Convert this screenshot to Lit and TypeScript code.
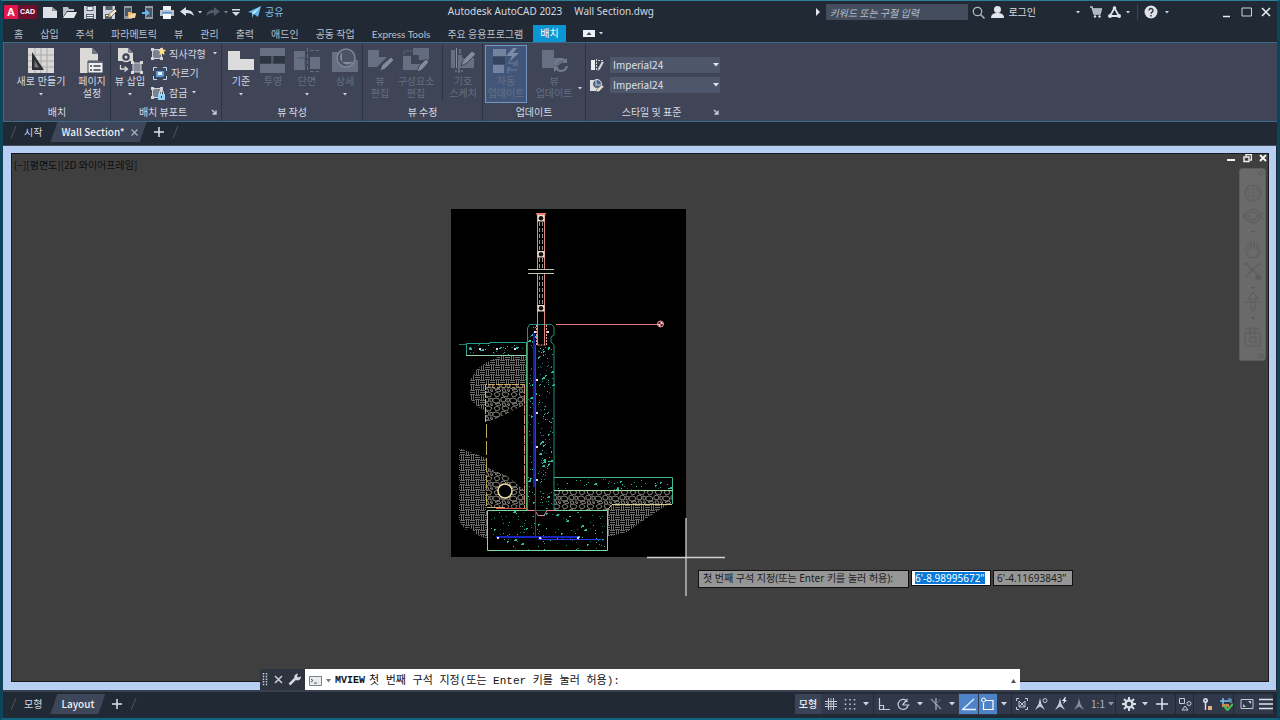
import { LitElement, html, svg, css, type TemplateResult } from "lit";
import { customElement, property } from "lit/decorators.js";

type Shape = unknown;

const icon = (w: number, h: number, body: Shape, cls = "") =>
  html`<svg class=${cls} width=${w} height=${h} viewBox="0 0 ${w} ${h}" fill="none" aria-hidden="true">${body}</svg>`;

const caret = (color = "#cfd6e2") => icon(6, 4, svg`<path d="M0 0h6L3 3.5z" fill=${color} />`);

/* ---------- quick access glyphs ---------- */
const qaNew = icon(14, 12, svg`<path d="M0 1h9l5 4v7H0z" fill="#dde1e7"/><path d="M9 1v4h5" fill="#8c94a1"/>`);
const qaOpen = icon(14, 12, svg`<path d="M0 11V1h5l1 2h5v2H4z" fill="#b9c0ca"/><path d="M4 6h10l-3 6H0z" fill="#e3e6ea"/>`);
const qaSave = icon(14, 13, svg`<path d="M1 0h12v13H1z" fill="#cfd4dc"/><path d="M3.500 0h7v5h-7zM3 8h8v5H3z" fill="#55606f"/><path d="M4.500 1h5v3h-5zM4 9h6v1H4zM4 11h6v1H4z" fill="#eceff3"/>`);
const qaSaveAs = icon(14, 13, svg`<path d="M0 0h12v13H0z" fill="#cfd4dc"/><path d="M2.500 0h7v4h-7zM2 8h7v5H2z" fill="#55606f"/><path d="M3 9h4v1H3z" fill="#eee"/><path d="M5 11l1-3 6-5 2 2-6 6z" fill="#f3e6c8" stroke="#27303d" stroke-width=".6"/><path d="M5 11l1-3 2 2z" fill="#dd9b49"/>`);
const qaMobOpen = icon(13, 13, svg`<path d="M1 0h8v13H1z" fill="#9099a6"/><path d="M2 2h6v8H2z" fill="#4c5664"/><path d="M5 12V6h3l1 1h4l-1 5z" fill="#e6b565"/><path d="M7 8h6l-1.500 4H5.500z" fill="#f4d59b"/>`);
const qaMobSave = icon(12, 13, svg`<path d="M3 0h8v13H3z" fill="#9099a6"/><path d="M4 2h6v9H4z" fill="#4c5664"/><path d="M0 6h4V3.500L8 7 4 10V8H0z" fill="#68b6f0"/>`);
const qaPrint = icon(14, 13, svg`<path d="M3 0h8v4H3z" fill="#eef0f3"/><path d="M0 4h14v6H0z" fill="#b9c2ce"/><path d="M2 6h10v1.500H2z" fill="#4b90cf"/><path d="M3 8h8v5H3z" fill="#f5f6f8"/>`);
const undo = (c: string) => icon(14, 10, svg`<path d="M6 0v3c5 0 7 2 8 6-2-2-4-3-8-3v3L0 4.500z" fill=${c}/>`);
const redo = icon(14, 10, svg`<path d="M8 0v3C3 3 1 5 0 9c2-2 4-3 8-3v3l6-4.500z" fill="#515a68"/>`);
const customize = icon(8, 7, svg`<path d="M0 0h8v1.500H0zM0 3h8L4 7z" fill="#d6dbe3"/>`);
const share = icon(13, 12, svg`<path d="M0 6L13 0 10 11 6 8 4 12 4 7z" fill="#62b7ee"/><path d="M4 7L13 0 6 8z" fill="#d4ecfb"/>`);

/* ---------- ribbon glyphs ---------- */
const dim = "#667082";
const bigNew = icon(28, 26, svg`<path d="M1 0h26v25H1z" fill="#d9d8d6"/><path d="M8 0v25M14 0v25M20 0v25M1 7h26M1 13h26M1 19h26" stroke="#aaa9a8"/><path d="M5 4v18h12z" fill="#2a2d33"/><path d="M7.500 12v7.500H12z" fill="#77797d"/>`);
const bigPage = icon(28, 26, svg`<path d="M2 0h12l6 6v19H2z" fill="#dcdad7"/><path d="M14 0v6h6" fill="#6f747d"/><path d="M10 13h15v12H10z" fill="#f1efec" stroke="#3f4556"/><path d="M10 13h15v2H10z" fill="#5f6673"/><path d="M12 18h2M12 22h2M15.500 18h7M15.500 22h7" stroke="#35425a" stroke-width="1.500"/>`);
const bigInsert = icon(28, 26, svg`<path d="M2 0h10l5 5v8H2z" fill="#dcdad7"/><path d="M12 0v5h5" fill="#7a7f88"/><circle cx="10" cy="9" r="4.500" fill="#3f4556" stroke="#dcdad7" stroke-width="1.500"/><circle cx="10" cy="9" r="1.500" fill="#dcdad7"/><path d="M4.500 17v4H11M8.500 18.500l3 2.500-3 2.500" stroke="#dcdad7" stroke-width="1.300"/><path d="M17 15h8v9h-8z" fill="#858b96" stroke="#cfd2d8"/><path d="M15 13h3v3h-3zM24 13h3v3h-3zM15 23h3v3h-3zM24 23h3v3h-3z" fill="#dcdad7"/>`);
const bigBase = icon(28, 26, svg`<path d="M1 3h12v8h14v11H1z" fill="#dcdcdd"/>`);
const bigProj = icon(28, 26, svg`<path d="M1 0h25v8H1zM1 16h25v9H1z" fill=${dim}/><path d="M1 8h12v7H1zM15 8h11v7H15z" fill="#2d3442"/><path d="M13 8v8" stroke=${dim}/>`);
const bigSection = icon(28, 26, svg`<path d="M1 3h11v19H1zM17 9h10v12H17z" fill=${dim}/><path d="M14.500 0v24M17 2.500h9M17 23.500h9" stroke=${dim} stroke-dasharray="4 2"/><path d="M4 10h8v8" stroke="#4d5566"/>`);
const bigDetail = icon(28, 26, svg`<path d="M1 4h8v8h18v12H1z" fill=${dim}/><circle cx="15" cy="10" r="9" stroke="#7c8596" stroke-width="1.500" fill="#4b5364"/><path d="M11 4v10h11a7 7 0 1 1-11-10z" fill="#838c9c"/>`);
const bigEdit = icon(28, 26, svg`<path d="M2 2h11v7h8L11 19H2z" fill=${dim}/><path d="M14 23l2-6 9-8 3 3-9 9z" fill="#828b9b" stroke="#3f4556"/>`);
const bigComp = icon(28, 26, svg`<path d="M1 8h8v8h9v6H1z" fill=${dim}/><path d="M11 0h16v12H17V7h-6z" fill="#626c7e"/><path d="M10 3H2v4" stroke=${dim} stroke-dasharray="2 1"/><path d="M15 24l2-6 7-7 3 3-7 8z" fill="#828b9b" stroke="#3f4556"/>`);
const bigSketch = icon(28, 26, svg`<path d="M2 2h4v18H2zM9 7h4v13H9zM13 10h12v10H13z" fill=${dim}/><path d="M7.500 0v20M11 1v5" stroke="#828b9b"/><path d="M12 18l2-6 9-9 4 3-9 9z" fill="#828b9b" stroke="#3f4556"/><path d="M6 23h9M10 20v5" stroke="#828b9b" stroke-dasharray="2 1"/>`);
const bigAuto = icon(28, 26, svg`<path d="M1 1h13v7H1zM1 17h11v8H1z" fill="#7484a0"/><path d="M1 9h12v7H1z" fill="#34445f"/><path d="M21 0l-7 8h6l-3 6 10-9h-6l4-5z" fill="#7c8ca8"/><path d="M16 15h9M25 12v5h-4M25 22h-9M16 25v-5h3" stroke="#61728f" stroke-width="1.500"/>`);
const bigUpdate = icon(28, 26, svg`<path d="M2 2h12v8h9v4L15 20H2z" fill=${dim}/><path d="M15 16a6 6 0 0 1 11-2M27 18a6 6 0 0 1-11 2" stroke="#747d8e" stroke-width="2"/><path d="M27 10v5h-5zM14 24v-5h5z" fill="#747d8e"/>`);
const vpHandles = svg`<path d="M2 1h3v3H2zM11 1h3v3h-3zM2 10h3v3H2zM11 10h3v3h-3z" transform="translate(-2)" fill="#cfd2d8"/>`;
const smRect = icon(15, 13, svg`<path d="M1.500 2.500h9v9h-9z" fill="#7b828e" stroke="#cfd2d8"/>${vpHandles}<path d="M11 0l1 2.500 3 .5-2 2 .5 3L11 6.500 8.500 8 9 5 7 3l3-.5z" fill="#ffdf8a"/>`);
const smClip = icon(15, 13, svg`<path d="M3 4h8v5l-2 1H3z" fill="#5d9ce0"/><path d="M5 5h4v3H5z" fill="#e8f2ff"/><path d="M.500 4V.500H4M10 .500h3.500V4M.500 9v3.500H4M10 12.500h3.500V9" stroke="#b5dcff"/>`);
const smLock = icon(15, 14, svg`<path d="M1.500 2.500h9v9h-9z" fill="#7b828e" stroke="#cfd2d8"/>${vpHandles}<path d="M7 8h7v6H7z" fill="#8fd2f5"/><path d="M8.500 8V6.500a2 2 0 0 1 4 0V8" stroke="#e4f4fd"/><path d="M10 10h1v2h-1z" fill="#335"/>`);
const smSection = icon(14, 14, svg`<path d="M1 2h4v10H1z" fill="#eceef1"/><path d="M6.500 1v12M8 2.500h5M8 11.500h3" stroke="#cfd3da" stroke-dasharray="2 1"/><path d="M7 13l1-3 4-7 2 1.500-4 7z" fill="#d9dce2" stroke="#3f4556" stroke-width=".500"/>`);
const smDetail = icon(14, 14, svg`<path d="M0 2h4v7h6v4H0z" fill="#dcdfe4"/><circle cx="7" cy="6" r="4.500" stroke="#dfe3e9" fill="#56617a"/><path d="M6 2v5h5" stroke="#9fb6d8" stroke-width="1.500"/><path d="M6 14l1-3 5-4 2 1.500-5 5z" fill="#f0e4c8" stroke="#3f4556" stroke-width=".500"/>`);
const launcher = icon(6, 6, svg`<path d="M1 1l3 3M5 1.500V5H1.500" stroke="#cdd3dd" stroke-width="1.300"/>`);

/* ---------- status bar glyphs ---------- */
const s = "#c6ccd7";
const stGrid = icon(14, 14, svg`<path d="M4.500 1v12M9.500 1v12M1 4.500h12M1 9.500h12" stroke=${s}/><path d="M7 1v12M1 7h12" stroke=${s} stroke-width=".800"/>`);
const stSnap = icon(14, 14, svg`<path d="M2.500 2v11M7 2v11M11.500 2v11" stroke=${s} stroke-width="1.500" stroke-dasharray="1.500 3"/>`);
const stOrtho = icon(14, 14, svg`<path d="M2.500 1v11.500H13M2.500 8.500h4v4" stroke=${s} stroke-width="1.200"/>`);
const stPolar = icon(14, 14, svg`<path d="M11.500 5A5 5 0 1 0 12 8.500M6.500 8h7M6.500 8l5-6" stroke=${s} stroke-width="1.200"/>`);
const stIso = icon(14, 14, svg`<path d="M2 2l10 10" stroke="#8f98a8" stroke-width="1.200"/><path d="M7 1v12" stroke=${s}/><path d="M7 7L12 2" stroke="#606b7d"/>`);
const stTrack = icon(16, 14, svg`<path d="M1 12.500h14M2 12L13 2" stroke="#e8f1ff" stroke-width="1.300"/>`);
const stOsnap = icon(16, 14, svg`<path d="M5.500 3.500H13v9H3.500V6" stroke="#fff" stroke-width="1.200"/><circle cx="3.500" cy="3" r="2" stroke="#fff"/>`);
const stSel = icon(14, 14, svg`<path d="M1.500 4V1.500H4M10 1.500h2.500V4M1.500 10v2.500H4M10 12.500h2.500V10" stroke=${s}/><path d="M4 4l6 6M10 4l-6 6M4 4v6h6V4" stroke=${s}/>`);
const person = (extra: Shape, c = s) => icon(14, 14, svg`<path d="M6 1l1.500 6L11 13 6 9.500 1 13 4.500 7z" fill=${c}/>${extra}`);
const stAnn1 = person(svg`<circle cx="11" cy="3.500" r="2" stroke=${s}/>`);
const stAnn2 = person(svg`<path d="M11 0L8 4h2L9 7l4-4h-2l1-3z" fill="#e7ebf1"/>`);
const stAnn3 = person("", "#858e9e");
const stGear = icon(14, 14, svg`<circle cx="7" cy="7" r="3.500" stroke="#d6dbe4" stroke-width="2.500"/><path d="M7 0v3M7 11v3M0 7h3M11 7h3M2 2l2.200 2.200M9.800 9.800L12 12M12 2L9.800 4.200M4.200 9.800L2 12" stroke="#d6dbe4" stroke-width="2"/>`);
const plus = (n: number) => icon(n, n, svg`<path d=${`M${n / 2} 1v${n - 2}M1 ${n / 2}h${n - 2}`} stroke="#dfe3ea" stroke-width="1.500"/>`);
const stIsolate = icon(14, 14, svg`<path d="M1.500 1.500h5v5h-5zM7 9l3 4H4z" stroke=${s}/><circle cx="11" cy="6.500" r="2" stroke=${s}/>`);
const stHw = icon(14, 14, svg`<circle cx="5.500" cy="3.500" r="2.500" fill="#d6dbe4"/><circle cx="5.500" cy="3.500" r=".8" fill="#303849"/><path d="M5.500 5v8" stroke="#d6dbe4" stroke-width="1.500"/><path d="M8 9h4v4H8z" fill="#e6b27c"/>`);
const stHwOk = icon(14, 14, svg`<path d="M1 4h10M4 1v8" stroke="#7fc0ef" stroke-width="1.500"/><path d="M3 7h7v3H3z" fill="#c98a4b"/><path d="M5 9l3.500 4L14 7" stroke="#4fbd55" stroke-width="2"/><path d="M9 2h3v4" stroke="#7fc0ef"/>`);
const stFull = icon(14, 12, svg`<path d="M1 1.500h12v9H1z" stroke=${s}/><path d="M8 3h3v3zM3 6v3h3z" fill=${s}/>`);
const stMenu = icon(14, 12, svg`<path d="M0 1.500h14M0 6h14M0 10.500h14" stroke="#dfe3ea" stroke-width="1.300"/>`);

/* ---------- wall section drawing ---------- */
const specks = (seed: number, x: number, y: number, w: number, h: number, n: number) => {
  let v = seed;
  const next = () => (v = (v * 16807) % 2147483647) / 2147483647;
  next();
  const tones = ["#1d8f78", "#2bb396", "#0f5f50", "#39c9b0", "#0d5347", "#1a7f6b"];
  return Array.from({ length: n }, (_, i) => {
    const px = Math.round(x + next() * w);
    const py = Math.round(y + next() * h);
    return i % 8 === 0
      ? svg`<path d=${i % 16 ? `M${px} ${py}h2v1h-1v1h-1z` : `M${px} ${py}h1v-1h2v2h-3z`} fill="#2fbfa6" />`
      : svg`<rect x=${px} y=${py} width="1" height="1" fill=${tones[i % tones.length]} />`;
  });
};

const rebar = (pts: number[][]) => pts.map(([x, y]) => svg`<rect x=${x - 1} y=${y - 1} width="2" height="2" fill="#e9ddff" />`);

@customElement("wall-section")
export class WallSection extends LitElement {
  static styles = css`
    :host { display: block; }
    svg { display: block; background: #000; }
  `;
  render() {
    return html`<svg width="235" height="348" viewBox="451 209 235 348" fill="none" role="img" aria-label="Wall Section">
      <defs>
        <pattern id="earth" width="10" height="10" patternUnits="userSpaceOnUse">
          <path d="M0 .5h5M0 2.500h5M0 4.500h5M6.500 0v5M8.500 0v5M1.500 5v5M3.500 5v5M5 5.500h5M5 7.500h5M5 9.500h5" stroke="#6c6c6c" />
        </pattern>
        <pattern id="gravel" width="17" height="14" patternUnits="userSpaceOnUse">
          <path d="M1 2l3-2 3 2-1 2-3 1zM9 1l4-1 3 2-2 3-4-1zM0 7l3-1 3 1 1 3-4 1-3-1zM8 6l3-1 2 2-1 3-4-1zM14 6l3 1-1 3-2 0zM2 12l4-1 2 2-3 1zM9 11l3 0 1 3-3 0zM14 12l3 0-1 2z" stroke="#8f8b84" stroke-width=".9" />
        </pattern>
      </defs>

      <path d="M500 356h26v29h-40v26l-8-4-8-8v-18l6-11 11-8z" fill="url(#earth)" />
      <path d="M486 385h38v20l-20 10-18 8z" fill="url(#gravel)" />
      <path d="M459 448l27 10v53h2v29l-12-6-6-7-4 3-7-8z" fill="url(#earth)" />
      <path d="M486 467l21 9 17 14v18h-38z" fill="url(#gravel)" />
      <path d="M554 491h119v13h-60l-6 6h-53z" fill="url(#gravel)" />
      <path d="M607 510l6-5h54l-26 17-14 10-20 5z" fill="url(#earth)" />

      ${specks(911, 468, 344, 56, 10, 34)}
      ${specks(2303, 538, 346, 14, 162, 150)}
      ${specks(7717, 528, 340, 6, 168, 60)}
      ${specks(505, 528, 326, 8, 16, 10)}
      ${specks(3701, 489, 512, 116, 37, 130)}
      ${specks(5309, 556, 479, 114, 10, 46)}

      <path d="M459 344.500h7" stroke="#1d7a70" />
      <path d="M466.500 355V343.500H490V342.500H527" stroke="#27a08f" />
      <path d="M466 355.500h61" stroke="#8fd6b0" />
      <path d="M527.500 511V328l2-3.500h22l2.500 2.500v8l-3 2v5l3 3v166" stroke="#1d9080" />
      <path d="M526.500 343v167" stroke="#4fae74" />
      <path d="M554 477.500h118.500V504" stroke="#3fb497" />
      <path d="M554 490.500h119" stroke="#a5e1a5" />
      <path d="M554 510.500h53l5-6h60" stroke="#d8cf90" />

      <path d="M485.500 422v-37.500h39" stroke="#d8b06a" stroke-dasharray="7 1" />
      <path d="M487 387.500h36" stroke="#a98a58" stroke-dasharray="3 2" />
      <path d="M486.500 424v84" stroke="#b3a860" stroke-dasharray="14 3" />
      <path d="M524.500 385v124" stroke="#e08a76" stroke-dasharray="9 1" />
      <path d="M487 507.500h18" stroke="#d8b06a" />
      <path d="M496 508.500h31" stroke="#d9564d" />
      <circle cx="505" cy="491" r="7" fill="#000" stroke="#f2dfa0" stroke-width="1.500" />

      <path d="M487.500 510.500v40h120v-40z" stroke="#79dba0" />
      <path d="M527 510.500h8l3 5h6l3-5h8" stroke="#e5889a" fill="#000" />
      <path d="M533 332h2v155h-2z" fill="#141fa8" />
      <path d="M535 345h1v193h-1z" fill="#2a38ee" />
      <path d="M496 536h82v2h-82z" fill="#1825c0" />
      <path d="M538 539h63v1h-63z" fill="#2a38ee" />
      ${rebar([[498, 538], [540, 538], [578, 538], [537, 413], [537, 447], [537, 480], [537, 380], [480, 349], [497, 349], [515, 349], [535, 332], [548, 332]])}

      <path d="M537 216h1v129h-1zM544 216h1v129h-1z" fill="#e0877d" />
      <path d="M536.500 325v20h10v-20" stroke="#e7a19a" stroke-dasharray="2 1" />
      <path d="M539.500 222v86M542.500 222v86" stroke="#a09490" stroke-dasharray="4 2" />
      <path d="M537 216h8l1-3h-10z" fill="#f08074" />
      <path d="M533 270h16v3h-16z" fill="#000" />
      <path d="M528 269.500h26M528 273.500h26" stroke="#bfc8b4" />
      ${[218, 254, 308].map((y) => svg`<rect x="537.500" y=${y - 3} width="7" height="6.500" fill="#f0dcd0" /><circle cx="541" cy=${y + 0.3} r="2.300" fill="#111" />`)}
      <path d="M556 324h101v1h-101z" fill="#e07f7a" />
      <circle cx="660.500" cy="324" r="3" fill="#5a1c20" stroke="#f09aa0" />
      <path d="M660.500 321v3h3zM660.500 324v3l-3-3z" fill="#ffd0d2" />
    </svg>`;
  }
}

@customElement("ribbon-button")
export class RibbonButton extends LitElement {
  @property() label = "";
  @property() second = "";
  @property({ type: Boolean }) menu = false;
  @property({ type: Boolean }) off = false;
  @property({ attribute: false }) glyph: TemplateResult | null = null;
  static styles = css`
    :host { display: block; flex: none; }
    button {
      width: 100%; height: 58px; padding: 3px 0 0; margin: 0; border: 0; background: none;
      display: flex; flex-direction: column; align-items: center;
      color: #d5dae3; font: 10px/12px "Liberation Sans", "Noto Sans CJK KR", sans-serif; white-space: nowrap;
    }
    button:disabled { color: #656e80; }
    svg { display: block; flex: none; }
    .text { margin-top: 2px; }
    .menu { height: 12px; display: flex; align-items: center; }
  `;
  render() {
    return html`<button ?disabled=${this.off}>
      ${this.glyph}
      <span class="text">${this.label}</span>
      ${this.second ? html`<span>${this.second}</span>` : ""}
      ${this.menu ? html`<span class="menu">${icon(4, 3, svg`<path d="M0 0h4L2 2.500z" fill="#cfd6e2"/>`)}</span>` : ""}
    </button>`;
  }
}

@customElement("app-root")
export class AppRoot extends LitElement {
  static styles = css`
    :host {
      display: flex; flex-direction: column; height: 100vh; box-sizing: border-box; overflow: hidden;
      border: 3px solid #0d4459; border-top: 1px solid #2b8296; border-bottom: 2px solid #0f6480;
      background: #212934; color: #c9cfd9;
      font: 10px/12px "Noto Sans CJK KR", "Noto Sans", sans-serif;
    }
    * { box-sizing: border-box; }
    button, input, select { font: inherit; color: inherit; margin: 0; padding: 0; border: 0; background: none; border-radius: 0; }
    button { display: inline-flex; align-items: center; justify-content: center; }
    a { color: inherit; text-decoration: none; }
    svg { display: block; flex: none; }
    .wide { font-family: "Noto Sans", "Noto Sans CJK KR", sans-serif; }

    .title { display: flex; align-items: center; height: 24px; flex: none; padding: 0 6px 2px 1px; }
    .quick { display: flex; align-items: center; gap: 6px; }
    .quick .drop { margin: 0 -2px; }
    .logo { display: flex; height: 14px; width: 33px; background: #6d0f2d; color: #fff; font: bold 7px/14px "Liberation Sans", sans-serif; border-radius: 1px; overflow: hidden; }
    .logo b { width: 14px; background: #e3174f; font-size: 11px; text-align: center; }
    .logo span { flex: 1; text-align: center; }
    .share { gap: 4px; color: #7fc0ee; margin-left: 2px; }
    .name { flex: 1; display: flex; justify-content: center; gap: 12px; color: #d3d8e0; white-space: nowrap; padding: 0 0 2px 2px; }
    .account { display: flex; align-items: center; }
    .search { width: 142px; height: 16px; background: #434d5d; color: #c3cad6; padding: 0 3px; margin: 0 4px 0 6px; font-style: italic; }
    .search::placeholder { color: #b6bfcd; opacity: 1; }
    .login { gap: 4px; margin: 0 40px 0 6px; color: #d9dee6; }
    .cart { margin-left: 10px; }
    .apps { gap: 5px; margin-left: 6px; }
    .rule { width: 1px; height: 16px; background: #3c4553; margin: 0 6px 0 7px; }
    .help { gap: 7px; }
    .window { display: flex; gap: 9px; margin-left: 52px; }

    .menu { display: flex; align-items: center; height: 17px; flex: none; padding-left: 11px; gap: 17px; color: #b9c0cc; white-space: nowrap; }
    .menu .on { background: #0b95d2; color: #fff; height: 17px; padding: 2px 7px; margin: 0 0 0 -7px; }
    .menu .fold { gap: 4px; }
    .latin { font-family: "Lato", sans-serif; }

    .ribbon { display: flex; height: 80px; flex: none; background: #3f4557; border: 1px solid #3a6c8a; border-width: 1px 0 1px 1px; }
    .panel { display: grid; grid-template-rows: 60px 1fr; border-right: 1px solid #2c3342; color: #d5dae3; }
    .tools { display: flex; padding-top: 2px; }
    .panel h2 { margin: 0; font: inherit; display: flex; align-items: center; padding: 0 4px; }
    .panel h2 span { flex: 1; text-align: center; }
    .panel.last { border: 0; }
    .pad { padding-right: 4px; }
    .w26 { width: 26px; } .w28 { width: 28px; } .w34 { width: 34px; } .w38 { width: 38px; } .w42 { width: 42px; } .w54 { width: 54px; } .w74 { width: 74px; }
    .rows { display: flex; flex-direction: column; justify-content: space-between; align-items: flex-start; height: 52px; padding: 0 4px 0 2px; margin-top: 2px; }
    .rows button { gap: 3px; white-space: nowrap; height: 13px; }
    .rows button svg:last-child { margin-left: 2px; }
    .sep { width: 1px; height: 56px; background: #2c3342; margin: 0 1px 0 7px; }
    .lit { background: #42567a; outline: 1px solid #7294c2; outline-offset: -1px; }
    .more { align-self: center; margin: 28px 3px 0 -3px; }
    .auto { padding-left: 2px; }
    .styles { display: flex; flex-direction: column; gap: 4px; padding: 14px 3px 0 4px; }
    .styles label { display: flex; align-items: center; gap: 6px; }
    .combo { position: relative; width: 110px; height: 16px; display: flex; }
    .combo select { appearance: none; width: 100%; background: #4d566b; padding: 0 3px; color: #dde2ea; }
    .combo svg { position: absolute; right: 1px; top: 6px; }

    .tabs { display: flex; align-items: center; height: 24px; flex: none; padding: 0 0 3px 6px; border-bottom: 1px solid #444c5a; color: #d5dae3; }
    .tabs.foot { height: auto; padding: 0 0 0 6px; border: 0; }
    .tabs > a { padding: 4px 8px 4px 7px; }
    .tabs > button { width: 24px; height: 20px; }
    .tab { display: flex; align-items: center; gap: 5px; height: 20px; padding: 0 8px 0 11px; background: #3e4659; color: #eceff4; font-weight: 500; clip-path: polygon(7px 0, 100% 0, calc(100% - 7px) 100%, 0 100%); }
    .tabs.foot .tab { padding: 0 11px; }

    .work { position: relative; flex: 1; min-height: 0; padding: 7px 7px 8px 8px; background: #b7cff2; display: flex; margin-right: 1px; }
    .canvas { position: relative; flex: 1; background: #3f3f3f; border: 1px solid #17191d; overflow: hidden; }
    .view { color: #0d0d0d; padding: 5px 2px; }
    .sheet { position: absolute; left: 439px; top: 55px; }
    .cross { position: absolute; left: 635px; top: 364px; }
    .prompt { position: absolute; left: 686px; top: 416px; display: flex; align-items: flex-start; gap: 2px; color: #1c1c1c; }
    .prompt label { background: #969696; border: 1px solid #101010; height: 18px; padding: 1px 4px; width: 211px; white-space: nowrap; }
    .value { display: flex; align-items: center; border: 1px solid #101010; height: 16px; width: 80px; padding: 0 3px; background: #969696; }
    .value input { width: 70px; height: 12px; }
    .value.active { background: #fff; }
    .value.active input { background: #0a78d7; color: #fff; }
    .doc { position: absolute; right: 0; top: 0; display: flex; gap: 7px; }
    .nav { position: absolute; right: 2px; top: 14px; width: 27px; height: 193px; background: #6a6a6a; border: 1px solid #5c5c5c; border-radius: 3px; }

    .command { position: absolute; left: 257px; right: 256px; bottom: 0; height: 21px; display: flex; background: #2d333f; color: #111; }
    .command .grip { width: 45px; display: flex; align-items: center; justify-content: space-between; padding: 0 4px 0 2px; }
    .command .line { flex: 1; display: flex; align-items: center; gap: 4px; background: #fff; padding: 2px 4px 0; font-family: "Liberation Mono", "Noto Sans CJK KR", monospace; font-size: 11px; white-space: nowrap; }
    .command .line > b { font-size: 10px; }
    .command input { flex: 1; min-width: 0; height: 15px; }

    .status { display: flex; justify-content: space-between; align-items: center; height: 28px; flex: none; padding: 0 4px 2px 0; border-top: 2px solid #39404e; }
    .toggles { display: flex; background: #303849; height: 20px; color: #aeb6c4; }
    .toggles button { height: 20px; }
    .t8 { width: 8px; } .t14 { width: 14px; } .t18 { width: 18px; } .t20 { width: 20px; } .t26 { width: 26px; }
    .model { color: #eef0f4; font-weight: 500; background: #3b4356; }
    .hot { background: #4f83c8; outline: 1px solid #303849; }
    .edge { border-left: 1px solid #212934; }
  `;

  private combo(id: string, name: string, glyph: TemplateResult) {
    return html`<label for=${id} aria-label=${name}>${glyph}
      <span class="combo"><select id=${id} aria-label=${name}><option>Imperial24</option></select>${caret("#dfe4ec")}</span></label>`;
  }

  private btn(label: string, glyph: TemplateResult, cls: string, o: { second?: string; menu?: boolean; off?: boolean } = {}) {
    return html`<ribbon-button class=${cls} .label=${label} .glyph=${glyph} .second=${o.second ?? ""} .menu=${!!o.menu} .off=${!!o.off}></ribbon-button>`;
  }

  private slash() {
    return icon(8, 14, svg`<path d="M2 13L7 1" stroke="#4b5462"/>`);
  }

  render() {
    const tiny = (c = "#cfd6e2") => icon(4, 3, svg`<path d="M0 0h4L2 2.500z" fill=${c}/>`);
    const toggles: [string, unknown, string][] = [
      ["t26 model", "모형", "모형"], ["t20", stGrid, "그리드"], ["t18", stSnap, "스냅"], ["t14", caret(), "스냅 옵션"],
      ["t20 edge", stOrtho, "직교"], ["t20", stPolar, "극좌표"], ["t14", caret(), "극좌표 옵션"], ["t18", stIso, "등각투영"],
      ["t14", caret(), "등각투영 옵션"], ["t20 hot", stTrack, "객체 스냅 추적"], ["t18 hot", stOsnap, "객체 스냅"], ["t14", caret(), "객체 스냅 옵션"],
      ["t20 edge", stSel, "주석 감시"], ["t20", stAnn1, "주석 객체"], ["t20", stAnn2, "자동 축척"], ["t18", stAnn3, "주석 축척"],
      ["t18", "1:1", "축척"], ["t8", caret("#8e97a6"), "축척 옵션"], ["t26 edge", stGear, "작업공간"], ["t8", caret(), "작업공간 옵션"],
      ["t26", plus(14), "주석 모니터"], ["t18 edge", stIsolate, "객체 분리"], ["t26 edge", stHw, "하드웨어"], ["t14", stHwOk, "그래픽 성능"],
      ["t26 edge", stFull, "화면 정리"], ["t14", stMenu, "사용자화"],
    ];
    const quick: [TemplateResult, string, string?][] = [
      [qaNew, "새로 만들기"], [qaOpen, "열기"], [qaSave, "저장"], [qaSaveAs, "다른 이름으로 저장"], [qaMobOpen, "웹에서 열기"],
      [qaMobSave, "웹에 저장"], [qaPrint, "플롯"], [undo("#dde1e8"), "명령 취소"], [tiny(), "취소 목록", "drop"], [redo, "명령 복구"], [tiny("#7d8694"), "복구 목록", "drop"], [customize, "사용자화"],
    ];
    return html`
      <header class="title">
        <div class="quick">
          <div class="logo"><b>A</b><span>CAD</span></div>
          ${quick.map(([g, n, c]) => html`<button class=${c ?? ""} aria-label=${n}>${g}</button>`)}
          <button class="share">${share}공유</button>
        </div>
        <div class="name wide"><span>Autodesk AutoCAD 2023</span><span>Wall Section.dwg</span></div>
        <div class="account">
          ${icon(4, 8, svg`<path d="M0 0l4 4-4 4z" fill="#e4e8ee"/>`)}
          <input class="search" type="search" aria-label="검색" placeholder="키워드 또는 구절 입력" />
          <button aria-label="검색">${icon(13, 13, svg`<circle cx="5.500" cy="5.500" r="4.200" stroke="#aeb6c2" stroke-width="1.300"/><path d="M8.500 8.500l4 4" stroke="#aeb6c2" stroke-width="1.500"/>`)}</button>
          <button class="login">${icon(13, 12, svg`<circle cx="6.500" cy="3.500" r="3.500" fill="#e1e5eb"/><path d="M0 12c0-4 3-5 6.500-5S13 8 13 12z" fill="#e1e5eb"/>`)}로그인</button>
          <button aria-label="계정 메뉴">${tiny()}</button>
          <button class="cart" aria-label="앱 스토어">${icon(12, 12, svg`<path d="M0 1h2l2 7h6l1.500-5H3" stroke="#c9cfd9" stroke-width="1.300"/><path d="M3 3h8l-1 5H4z" fill="#aeb6c2"/><circle cx="5" cy="10.500" r="1.200" fill="#dde"/><circle cx="9.500" cy="10.500" r="1.200" fill="#dde"/>`)}</button>
          <button class="apps" aria-label="Autodesk 앱">${icon(13, 12, svg`<path d="M6.500 2L2 10h9z" stroke="#dfe3ea" stroke-width="1.800"/><circle cx="6.500" cy="2" r="1.800" fill="#dfe3ea"/><circle cx="2" cy="10" r="2" fill="#dfe3ea"/><circle cx="11" cy="10" r="2" fill="#dfe3ea"/>`)}${tiny()}</button>
          <span class="rule"></span>
          <button class="help" aria-label="도움말">${icon(14, 14, svg`<circle cx="7" cy="7" r="6.500" fill="#dfe2e7"/><path d="M5 5.500a2 2 0 1 1 3 1.700c-.8.500-1 .8-1 1.600M7 10v1.500" stroke="#2c3442" stroke-width="1.400"/>`)}${tiny()}</button>
          <div class="window">
            <button aria-label="최소화">${icon(11, 12, svg`<path d="M2 10.500h7" stroke="#e8ebf0" stroke-width="1.500"/>`)}</button>
            <button aria-label="최대화">${icon(11, 12, svg`<path d="M1 2h9.500v8H1z" stroke="#cdd2da"/>`)}</button>
            <button aria-label="닫기">${icon(10, 12, svg`<path d="M1 2l8 8M9 2L1 10" stroke="#e8ebf0" stroke-width="1.600"/>`)}</button>
          </div>
        </div>
      </header>

      <nav class="menu">
        ${["홈", "삽입", "주석", "파라메트릭", "뷰", "관리", "출력", "애드인", "공동 작업"].map((t) => html`<a href="#">${t}</a>`)}
        <a href="#" class="latin">Express Tools</a>
        <a href="#">주요 응용프로그램</a>
        <a href="#" class="on">배치</a>
        <button class="fold" aria-label="리본 최소화">${icon(12, 7, svg`<path d="M0 0h12v7H0z" fill="#eef0f4"/><path d="M3.500 5L6 2l2.500 3z" fill="#3b4352"/>`)}${tiny()}</button>
      </nav>

      <section class="ribbon">
        <div class="panel">
          <div class="tools pad">
            ${this.btn("새로 만들기", bigNew, "w74", { menu: true })}
            ${this.btn("페이지", bigPage, "w28", { second: "설정" })}
          </div>
          <h2><span>배치</span></h2>
        </div>
        <div class="panel">
          <div class="tools">
            ${this.btn("뷰 삽입", bigInsert, "w38", { menu: true })}
            <div class="rows">
              <button>${smRect}직사각형&nbsp;${tiny()}</button>
              <button>${smClip}자르기</button>
              <button>${smLock}잠금${tiny()}</button>
            </div>
          </div>
          <h2><span>배치 뷰포트</span><button aria-label="뷰포트 설정">${launcher}</button></h2>
        </div>
        <div class="panel">
          <div class="tools">
            ${this.btn("기준", bigBase, "w38", { menu: true })}
            ${this.btn("투영", bigProj, "w26", { off: true })}
            ${this.btn("단면", bigSection, "w42", { off: true, menu: true })}
            ${this.btn("상세", bigDetail, "w34", { off: true, menu: true })}
          </div>
          <h2><span>뷰 작성</span></h2>
        </div>
        <div class="panel">
          <div class="tools">
            ${this.btn("뷰", bigEdit, "w34", { off: true, second: "편집" })}
            ${this.btn("구성요소", bigComp, "w38", { off: true, second: "편집" })}
            <span class="sep"></span>
            ${this.btn("기호", bigSketch, "w38", { off: true, second: "스케치" })}
          </div>
          <h2><span>뷰 수정</span></h2>
        </div>
        <div class="panel">
          <div class="tools auto">
            ${this.btn("자동", bigAuto, "w42 lit", { off: true, second: "업데이트" })}
            ${this.btn("뷰", bigUpdate, "w54", { off: true, second: "업데이트" })}
            <span class="more">${tiny()}</span>
          </div>
          <h2><span>업데이트</span></h2>
        </div>
        <div class="panel last">
          <div class="styles">
            ${this.combo("section-style", "단면 뷰 스타일", smSection)}
            ${this.combo("detail-style", "상세 뷰 스타일", smDetail)}
          </div>
          <h2><span>스타일 및 표준</span><button aria-label="스타일 설정">${launcher}</button></h2>
        </div>
      </section>

      <nav class="tabs">
        ${this.slash()}<a href="#">시작</a>
        <div class="tab"><span>Wall Section*</span><button aria-label="탭 닫기">${icon(9, 9, svg`<path d="M1.500 1.500l6 6M7.500 1.500l-6 6" stroke="#a9b1bf" stroke-width="1.200"/>`)}</button></div>
        <button aria-label="새 탭">${plus(12)}</button>${this.slash()}
      </nav>

      <main class="work">
        <div class="canvas">
          <div class="view">[−][평면도][2D 와이어프레임]</div>
          <wall-section class="sheet"></wall-section>
          ${icon(78, 78, svg`<path d="M39 0v78M0 39.500h78" stroke="#d0d0d0" stroke-width="1.300"/>`, "cross")}
          <div class="prompt">
            <label class="wide" for="px">첫 번째 구석 지정(또는 Enter 키를 눌러 허용):</label>
            <div class="value active wide"><input id="px" value="6'-8.98995672&quot;" /></div>
            <div class="value wide"><input aria-label="Y" value="6'-4.11693843&quot;" /></div>
          </div>
          <div class="doc">
            ${icon(9, 9, svg`<path d="M0 5h8v2H0z" fill="#f2f2f2"/>`)}
            ${icon(9, 9, svg`<path d="M3 2V.500h5.500V6H7M1 3h5v4.500H1z" stroke="#f2f2f2" stroke-width="1.400"/>`)}
            ${icon(9, 9, svg`<path d="M1 1l6 6M7 1L1 7" stroke="#f2f2f2" stroke-width="2"/>`)}
          </div>
          <div class="nav">
            ${icon(25, 191, svg`<g stroke="#5d5d5d" stroke-width="1.200">
              <circle cx="21" cy="4" r="2"/><circle cx="21" cy="187" r="2"/>
              <circle cx="13" cy="24" r="8"/><path d="M8 20h10v7H8zM13 16v16" stroke="#626262"/>
              <circle cx="13" cy="47" r="7"/><circle cx="13" cy="47" r="4"/><path d="M4 43v8M22 43v8"/>
              <path d="M8 82v-7M11 80v-8M14 80v-8M17 81v-7M7 84c1 6 10 7 12 0v-6M7 84l-3-4"/>
              <path d="M5 94l15 14M20 94L5 108M3 95h5M18 95h4"/><path d="M16 107h5v3h-5z" fill="#5d5d5d"/>
              <path d="M13 123l-5 7h3v9l2 3 2-3v-9h3zM4 133h18"/>
              <path d="M5 160h15M5 164h15v13H5zM10 158v8M15 158v8M10 168h6v5h-6z"/>
            </g><path d="M11 62h4l-2 2zM11 118h4l-2 2zM11 148h4l-2 2z" fill="#555"/>`)}
          </div>
        </div>
        <div class="command">
          <div class="grip">
            ${icon(6, 15, svg`<path d="M1.500 1v13M4.500 1v13" stroke="#c9ced7" stroke-width="1.500" stroke-dasharray="1.500 1.200"/>`)}
            <button aria-label="닫기">${icon(9, 9, svg`<path d="M1 1l7 7M8 1L1 8" stroke="#c9ced7" stroke-width="1.500"/>`)}</button>
            <button aria-label="사용자화">${icon(13, 13, svg`<path d="M1.500 11.500L8 5" stroke="#d3d8e0" stroke-width="2.500"/><path d="M7 6a3.500 3.500 0 0 1 3-5.500L9 3l1 1.500 3-1A3.500 3.500 0 0 1 8 7z" fill="#d3d8e0"/>`)}</button>
          </div>
          <div class="line">
            ${icon(13, 10, svg`<path d="M.500 .500h12v9H.500z" stroke="#7b828c" fill="#e9ebee"/><path d="M2 3l2 1.500L2 6M5 7h3" stroke="#555"/>`)}
            ${icon(5, 4, svg`<path d="M0 0h5L2.500 3.500z" fill="#777"/>`)}
            <b>MVIEW</b>
            <label for="cmd">첫 번째 구석 지정(또는 Enter 키를 눌러 허용):</label>
            <input id="cmd" />
            <button aria-label="명령 기록">${icon(5, 4, svg`<path d="M0 4h5L2.500 0z" fill="#555"/>`)}</button>
          </div>
        </div>
      </main>

      <footer class="status">
        <nav class="tabs foot">
          ${this.slash()}<a href="#">모형</a>
          <div class="tab"><span>Layout</span></div>
          <button aria-label="새 배치">${plus(12)}</button>${this.slash()}
        </nav>
        <div class="toggles">
          ${toggles.map(([c, g, n]) => html`<button class=${c} aria-label=${n} title=${n}>${g}</button>`)}
        </div>
      </footer>
    `;
  }
}
